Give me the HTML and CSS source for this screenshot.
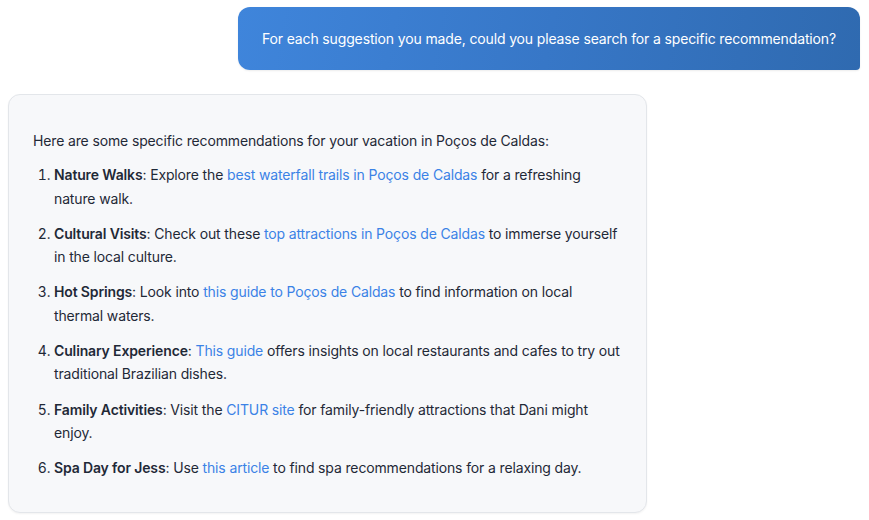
FILE: index.html
```html
<!DOCTYPE html>
<html lang="en">
<head>
<meta charset="utf-8">
<link rel="stylesheet" href="styles.css">
</head>
<body>
<div class="chat">
  <div class="row user-row">
    <div class="bubble user">For each suggestion you made, could you please search for a specific recommendation?</div>
  </div>
  <div class="row bot-row">
    <div class="bubble bot">
      <p>Here are some specific recommendations for your vacation in Poços de Caldas:</p>
      <ol>
        <li><strong>Nature Walks</strong>: Explore the <a href="#">best waterfall trails in Poços de Caldas</a> for a refreshing nature walk.</li>
        <li><strong>Cultural Visits</strong>: Check out these <a href="#">top attractions in Poços de Caldas</a> to immerse yourself in the local culture.</li>
        <li><strong>Hot Springs</strong>: Look into <a href="#">this guide to Poços de Caldas</a> to find information on local thermal waters.</li>
        <li><strong>Culinary Experience</strong>: <a href="#">This guide</a> offers insights on local restaurants and cafes to try out traditional Brazilian dishes.</li>
        <li><strong>Family Activities</strong>: Visit the <a href="#">CITUR site</a> for family-friendly attractions that Dani might enjoy.</li>
        <li><strong>Spa Day for Jess</strong>: Use <a href="#">this article</a> to find spa recommendations for a relaxing day.</li>
      </ol>
    </div>
  </div>
</div>
</body>
</html>
```
FILE: styles.css
```css
html, body {
  margin: 0;
  padding: 0;
  background: #ffffff;
}
body {
  font-family: Inter, "Noto Sans", sans-serif;
  font-size: 14px;
  letter-spacing: -0.14px;
  color: #1f2937;
}
.chat {
  display: flex;
  flex-direction: column;
  gap: 24px;
  padding: 7px 9px 8px 8px;
}
.row {
  display: flex;
}
.user-row {
  justify-content: flex-end;
}
.bot-row {
  justify-content: flex-start;
}
.bubble.user {
  background: linear-gradient(100deg, #3f85db 0%, #3777c7 50%, #2f6ab0 100%);
  color: #ffffff;
  padding: 0 24px;
  height: 63px;
  display: flex;
  align-items: center;
  border-radius: 12px 12px 4px 12px;
  line-height: 20px;
  box-shadow: 0 1px 2px rgba(0, 0, 0, 0.08);
}
.bubble.bot {
  box-sizing: border-box;
  width: 639px;
  background: #f7f8fa;
  border: 1px solid #e3e6ea;
  border-radius: 12px;
  padding: 34px 24px 32px 24px;
  line-height: 23.3px;
  box-shadow: 0 1px 2px rgba(0, 0, 0, 0.05);
}
.bubble.bot p {
  margin: 0 0 11px 0;
}
.bubble.bot ol {
  margin: 0;
  padding-left: 21px;
}
.bubble.bot li {
  margin-top: 12px;
}
.bubble.bot li:first-child {
  margin-top: 0;
}
.bubble.bot strong {
  font-weight: 600;
}
.bubble.bot a {
  color: #3b82e6;
  text-decoration: none;
}
```
